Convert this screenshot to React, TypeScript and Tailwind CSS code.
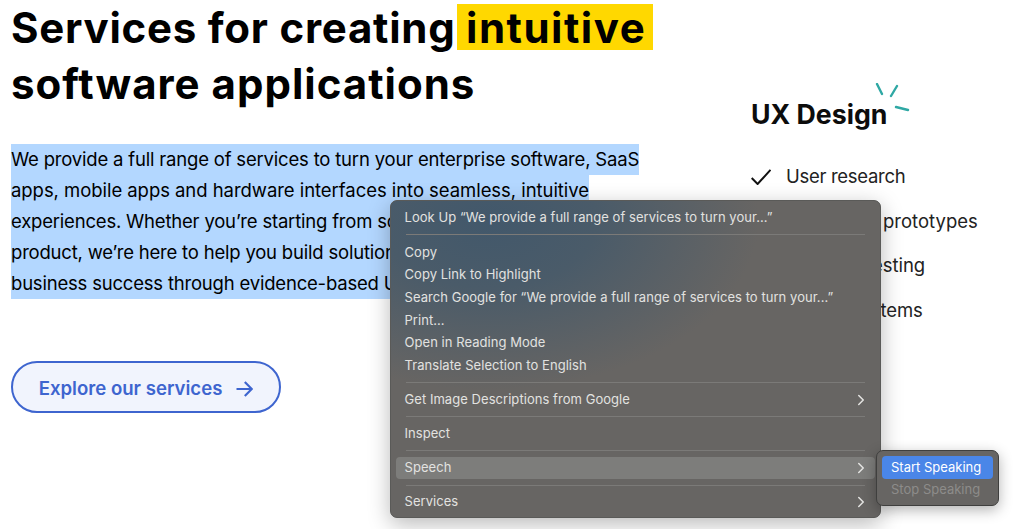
import React from "react";
import { ChevronRight } from "lucide-react";

const font = "font-['Inter','Liberation_Sans',sans-serif]";

function Sep({ first }: { first?: boolean }) {
  return <div className={`mx-[15px] h-px shrink-0 bg-[#7b7a78] ${first ? "mb-[6.3px] mt-[5.3px]" : "my-[5.3px]"}`} />;
}

function Item({ label, arrow, active }: { label: string; arrow?: boolean; active?: boolean }) {
  return (
    <div className={`mx-[5px] flex h-[22.6px] shrink-0 items-center justify-between rounded-[4px] pl-[8.5px] pr-[5px] ${active ? "bg-[#7d7d7b]" : ""}`}>
      <span className="whitespace-nowrap">{label}</span>
      {arrow && <ChevronRight size={18} strokeWidth={2} className="text-[#e4e4e2]" />}
    </div>
  );
}

function Line({ children, className = "" }: { children: React.ReactNode; className?: string }) {
  return <div className={`h-[31px] w-fit whitespace-nowrap bg-[#b3d7ff] leading-[31px] ${className}`}>{children}</div>;
}

function Feature({ children }: { children: React.ReactNode }) {
  return (
    <li className="flex h-[44.5px] items-center gap-[15px] whitespace-nowrap">
      <svg width="20" height="16" viewBox="0 0 20 16" fill="none" stroke="#111" strokeWidth="2" className="shrink-0">
        <path d="M0.7 9 L6.6 15 L19.5 0.8" />
      </svg>
      {children}
    </li>
  );
}

export default function App() {
  return (
    <div className={`relative h-[529px] w-[1030px] overflow-hidden bg-white text-black ${font}`}>
      <div className="flex">
        <div className="w-[740px] shrink-0 pl-[11px]">
          <h1 className="text-[42px] font-bold leading-[56px] text-black">
            <div className="flex items-start gap-[2px] whitespace-nowrap">
              <span className="w-[444px] tracking-[0.75px]">Services for creating</span>
              <span className="mt-[4px] h-[46px] bg-[#ffd800] pl-[9px] pr-[7px] leading-[47px] tracking-[1.5px]">intuitive</span>
            </div>
            <div className="whitespace-nowrap tracking-[1px]">software applications</div>
          </h1>
          <div className="mt-[32px] text-[18.5px] tracking-[-0.2px]">
            <Line className="tracking-[-0.19px]">We provide a full range of services to turn your enterprise software, SaaS</Line>
            <Line className="tracking-[-0.05px]">apps, mobile apps and hardware interfaces into seamless, intuitive</Line>
            <Line>experiences. Whether you’re starting from scratch or improving an existing</Line>
            <Line>product, we’re here to help you build solutions that drive user satisfaction</Line>
            <Line>business success through evidence-based UX design methods.</Line>
          </div>
          <a className="mt-[62px] flex h-[52px] w-[270px] items-center justify-center gap-[14px] rounded-full border-2 border-[#3e65cf] bg-[#f1f4fd] pt-[4px] text-[18.6px] font-semibold text-[#3e65cf]">
            Explore our services
            <svg width="17" height="16" viewBox="0 0 17 16" fill="none" stroke="#3e65cf" strokeWidth="2.2">
              <path d="M0.5 8 H15.5 M8.8 1 L15.8 8 L8.8 15" />
            </svg>
          </a>
        </div>
        <div className="pl-[11px] pt-[96px]">
          <div className="relative w-fit text-[26.7px] font-bold leading-[36px] text-[#0c0c0c]">
            UX Design
            <svg width="38" height="30" viewBox="0 0 38 30" fill="none" stroke="#2fa8a4" strokeWidth="2.4" strokeLinecap="round" className="absolute left-[124px] -top-[13px]">
              <path d="M2 1 L7 11 M22 3 L16 13 M21 24 L33 27" />
            </svg>
          </div>
          <ul className="mt-[23px] text-[18.5px] text-[#222]">
            <Feature><span className="tracking-[-0.3px]">User research</span></Feature>
            <Feature>Interactive prototypes</Feature>
            <Feature><span className="tracking-[-0.05px]">Usability testing</span></Feature>
            <Feature><span className="tracking-[-0.12px]">Design systems</span></Feature>
          </ul>
        </div>
      </div>

      <div className="absolute left-[390px] top-[200px] flex h-[318px] w-[491px] flex-col rounded-[7px] border border-[#5a5a58] bg-[#676563] bg-[radial-gradient(ellipse_270px_170px_at_20%_6%,#42586b_0%,#4a5b69_40%,#676563_100%)] pt-[5px] text-[13px] tracking-[0.05px] text-[#e2e2e0] shadow-[0_6px_22px_rgba(0,0,0,0.28)]">
        <Item label="Look Up “We provide a full range of services to turn your...”" />
        <Sep first />
        <Item label="Copy" />
        <Item label="Copy Link to Highlight" />
        <Item label="Search Google for “We provide a full range of services to turn your...”" />
        <Item label="Print..." />
        <Item label="Open in Reading Mode" />
        <Item label="Translate Selection to English" />
        <Sep />
        <Item label="Get Image Descriptions from Google" arrow />
        <Sep />
        <Item label="Inspect" />
        <Sep />
        <Item label="Speech" arrow active />
        <Sep />
        <Item label="Services" arrow />
      </div>

      <div className="absolute left-[876px] top-[450px] h-[56px] w-[123px] rounded-[7px] border border-[#3f3f3e] bg-[#676563] p-[5px] text-[13px] shadow-[0_4px_14px_rgba(0,0,0,0.3)]">
        <div className="flex h-[22.6px] items-center rounded-[4px] bg-[#4a86e8] pl-[9px] text-white">Start Speaking</div>
        <div className="flex h-[22.6px] items-center pl-[9px] text-[#8d8c8a]">Stop Speaking</div>
      </div>
    </div>
  );
}
